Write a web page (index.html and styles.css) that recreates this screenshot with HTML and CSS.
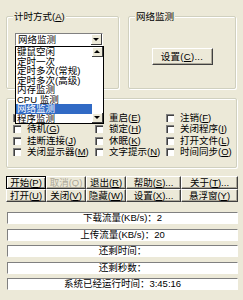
FILE: index.html
```html
<!DOCTYPE html>
<html>
<head>
    <title>计时器</title>
    <link rel="stylesheet" href="styles.css">
</head>
<body>
    <div class="dialog">
        <div class="top">
            <div class="group timer">
                <span class="group-title">计时方式(<u>A</u>)</span>
                <div class="combo">
                    <span class="combo-text">网络监测</span>
                    <span class="combo-btn"><span class="arrow-down"></span></span>
                    <div class="droplist">
                        <div class="item">键鼠空闲</div>
                        <div class="item">定时一次</div>
                        <div class="item">定时多次(常规)</div>
                        <div class="item">定时多次(高级)</div>
                        <div class="item">内存监测</div>
                        <div class="item">CPU 监测</div>
                        <div class="item selected">网络监测</div>
                        <div class="item">程序监测</div>
                        <div class="scrollbar">
                            <span class="sb-btn"><span class="arrow-up"></span></span>
                            <span class="sb-btn"><span class="arrow-down"></span></span>
                        </div>
                    </div>
                </div>
            </div>
            <div class="group net">
                <span class="group-title">网络监测</span>
                <button class="btn setup">设置(<u>C</u>)...</button>
            </div>
        </div>

        <div class="group actions">
            <label class="check"><span class="box"></span><span>关机(<u>D</u>)</span></label>
            <label class="check"><span class="box"></span><span>重启(<u>E</u>)</span></label>
            <label class="check"><span class="box"></span><span>注销(<u>F</u>)</span></label>
            <label class="check"><span class="box"></span><span>待机(<u>G</u>)</span></label>
            <label class="check"><span class="box"></span><span>锁定(<u>H</u>)</span></label>
            <label class="check"><span class="box"></span><span>关闭程序(<u>I</u>)</span></label>
            <label class="check"><span class="box"></span><span>挂断连接(<u>J</u>)</span></label>
            <label class="check"><span class="box"></span><span>休眠(<u>K</u>)</span></label>
            <label class="check"><span class="box"></span><span>打开文件(<u>L</u>)</span></label>
            <label class="check"><span class="box"></span><span>关闭显示器(<u>M</u>)</span></label>
            <label class="check"><span class="box"></span><span>文字提示(<u>N</u>)</span></label>
            <label class="check"><span class="box"></span><span>时间同步(<u>O</u>)</span></label>
        </div>

        <div class="buttons">
            <button class="btn default">开始(<u>P</u>)</button>
            <button class="btn" disabled>取消(<u>Q</u>)</button>
            <button class="btn">退出(<u>R</u>)</button>
            <button class="btn">帮助(<u>S</u>)...</button>
            <button class="btn">关于(<u>T</u>)...</button>
            <button class="btn">打开(<u>U</u>)</button>
            <button class="btn">关闭(<u>V</u>)</button>
            <button class="btn">隐藏(<u>W</u>)</button>
            <button class="btn">设置(<u>X</u>)...</button>
            <button class="btn">悬浮窗(<u>Y</u>)</button>
        </div>

        <div class="status">
            <div class="field">下载流量(KB/s)：2</div>
            <div class="field">上传流量(KB/s)：20</div>
            <div class="field">还剩时间：</div>
            <div class="field">还剩秒数：</div>
            <div class="field">系统已经运行时间：3:45:16</div>
        </div>
    </div>
</body>
</html>
```

FILE: styles.css
```css
body {
    margin: 0;
    background: #ece9d8;
    font-family: "Liberation Sans", "Noto Sans CJK SC", sans-serif;
    font-size: 9.5px;
    line-height: 10px;
    color: #000;
}

u {
    text-decoration: underline;
    text-underline-offset: 1px;
}

.dialog {
    width: 232px;
    padding: 16px 5px 0 6px;
}

.top {
    display: flex;
    gap: 9px;
}

.group {
    position: relative;
    box-sizing: border-box;
    border: 1px solid #d0d0bf;
    border-radius: 2px;
    box-shadow: 1px 1px 0 #fff, inset 1px 1px 0 #fff;
}

.group-title {
    position: absolute;
    top: -6px;
    left: 6px;
    padding: 0 1px;
    background: #ece9d8;
    line-height: 12px;
}

.timer {
    width: 113px;
    height: 73px;
}

.net {
    width: 108px;
    height: 73px;
    display: flex;
    justify-content: center;
    padding-top: 31px;
}

.combo {
    position: relative;
    display: flex;
    box-sizing: border-box;
    width: 88px;
    height: 13px;
    margin: 16px 0 0 8px;
    background: #fff;
    border-top: 1px solid #808080;
    border-left: 1px solid #808080;
    border-right: 1px solid #fff;
    border-bottom: 1px solid #fff;
}

.combo-text {
    flex: 1;
    padding-left: 2px;
    line-height: 11px;
}

.combo-btn {
    display: flex;
    align-items: center;
    justify-content: center;
    width: 10px;
    background: #ece9d8;
    border-right: 1px solid #404040;
    border-bottom: 1px solid #404040;
    box-shadow: inset 1px 1px 0 #fff;
}

.arrow-down {
    width: 0;
    height: 0;
    border-left: 3px solid transparent;
    border-right: 3px solid transparent;
    border-top: 3px solid #000;
}

.arrow-up {
    width: 0;
    height: 0;
    border-left: 3px solid transparent;
    border-right: 3px solid transparent;
    border-bottom: 3px solid #000;
}

.droplist {
    position: absolute;
    top: 12px;
    left: -1px;
    z-index: 2;
    box-sizing: border-box;
    width: 89px;
    height: 78px;
    padding-right: 11px;
    background: #fff;
    border: 1px solid #000;
}

.item {
    height: 9.5px;
    padding-left: 1px;
    line-height: 9.5px;
    white-space: nowrap;
}

.item.selected {
    background: #316ac5;
    color: #fff;
}

.scrollbar {
    position: absolute;
    top: 0;
    right: 0;
    bottom: 0;
    width: 11px;
    display: flex;
    flex-direction: column;
    justify-content: space-between;
    background: #fff;
}

.sb-btn {
    display: flex;
    align-items: center;
    justify-content: center;
    box-sizing: border-box;
    height: 10px;
    background: #ece9d8;
    border-right: 1px solid #404040;
    border-bottom: 1px solid #404040;
    box-shadow: inset 1px 1px 0 #fff;
}

.actions {
    margin-top: 9px;
    width: 231px;
    height: 70px;
    display: grid;
    grid-template-columns: 82px 71px 1fr;
    grid-auto-rows: 11.5px;
    padding: 13px 0 0 6px;
}

.check {
    display: flex;
    align-items: center;
    gap: 6px;
    white-space: nowrap;
}

.box {
    box-sizing: border-box;
    width: 8px;
    height: 8px;
    background: #fff;
    border-top: 1px solid #808080;
    border-left: 1px solid #808080;
    box-shadow: inset 1px 1px 0 #404040;
}

.buttons {
    margin-top: 8px;
    display: grid;
    grid-template-columns: 40px 40px 40px 55px 57px;
    grid-auto-rows: 13px;
}

.btn {
    box-sizing: border-box;
    margin: 0;
    padding: 0;
    font-family: inherit;
    font-size: 9.5px;
    line-height: 10px;
    color: #000;
    white-space: nowrap;
    background: #ece9d8;
    border: 1px solid;
    border-color: #fff #404040 #404040 #fff;
    box-shadow: inset -1px -1px 0 #aca899;
}

.btn:disabled {
    color: #aca899;
}

.btn.default {
    border: 1px solid #000;
    box-shadow: inset 1px 1px 0 #fff, inset -1px -1px 0 #808080;
}

.setup {
    width: 61px;
    height: 17px;
    letter-spacing: 0.3px;
}

.status {
    margin: 10px 0 0 1px;
    width: 231px;
    display: flex;
    flex-direction: column;
    gap: 4.5px;
}

.field {
    box-sizing: border-box;
    height: 12px;
    background: #fff;
    border-top: 1px solid #808080;
    border-left: 1px solid #808080;
    border-right: 1px solid #fff;
    border-bottom: 1px solid #fff;
    text-align: center;
    line-height: 10px;
}
```
